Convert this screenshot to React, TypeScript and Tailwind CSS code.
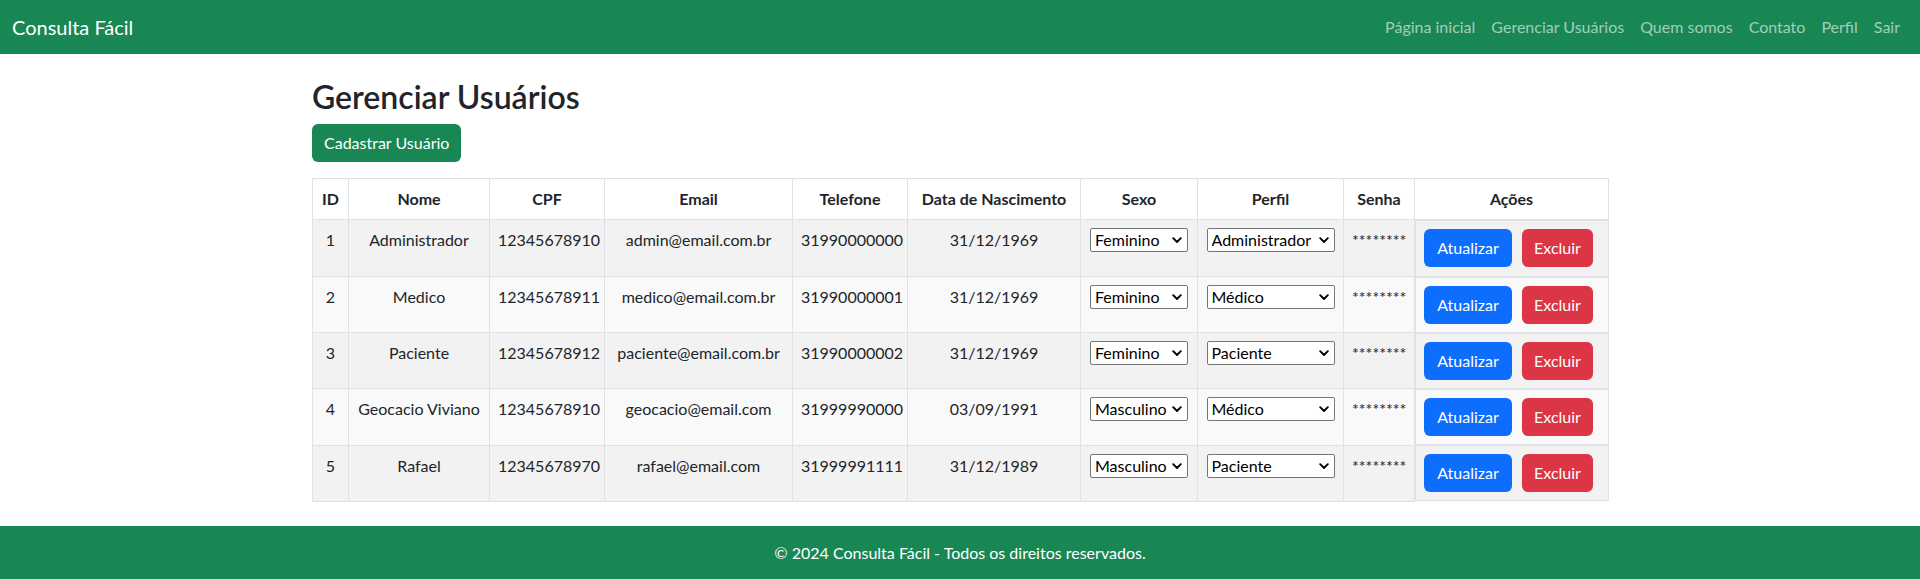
import React from 'react';

interface Usuario {
  id: number;
  nome: string;
  cpf: string;
  email: string;
  telefone: string;
  nascimento: string;
  sexo: string;
  perfil: string;
}

const usuarios: Usuario[] = [
  { id: 1, nome: 'Administrador', cpf: '12345678910', email: 'admin@email.com.br', telefone: '31990000000', nascimento: '31/12/1969', sexo: 'Feminino', perfil: 'Administrador' },
  { id: 2, nome: 'Medico', cpf: '12345678911', email: 'medico@email.com.br', telefone: '31990000001', nascimento: '31/12/1969', sexo: 'Feminino', perfil: 'Médico' },
  { id: 3, nome: 'Paciente', cpf: '12345678912', email: 'paciente@email.com.br', telefone: '31990000002', nascimento: '31/12/1969', sexo: 'Feminino', perfil: 'Paciente' },
  { id: 4, nome: 'Geocacio Viviano', cpf: '12345678910', email: 'geocacio@email.com', telefone: '31999990000', nascimento: '03/09/1991', sexo: 'Masculino', perfil: 'Médico' },
  { id: 5, nome: 'Rafael', cpf: '12345678970', email: 'rafael@email.com', telefone: '31999991111', nascimento: '31/12/1989', sexo: 'Masculino', perfil: 'Paciente' },
];

const links = ['Página inicial', 'Gerenciar Usuários', 'Quem somos', 'Contato', 'Perfil', 'Sair'];
const colunas = ['ID', 'Nome', 'CPF', 'Email', 'Telefone', 'Data de Nascimento', 'Sexo', 'Perfil', 'Senha', 'Ações'];

const Chevron = () => (
  <svg className="pointer-events-none absolute right-[6px] top-[9px]" width="10" height="7" viewBox="0 0 10 7">
    <path d="M1.2 1.2 L5 5 L8.8 1.2" fill="none" stroke="#000" strokeWidth="1.9" strokeLinecap="round" strokeLinejoin="round" />
  </svg>
);

const Select: React.FC<{ value: string; options: string[]; width: string }> = ({ value, options, width }) => (
  <span className={`relative inline-block align-top ${width}`}>
    <select
      defaultValue={value}
      className="h-[24px] w-full appearance-none rounded-[2px] border border-[#767676] bg-white pl-[4px] pr-[18px] text-left text-[16px] leading-[22px] text-black"
    >
      {options.map((o) => (
        <option key={o}>{o}</option>
      ))}
    </select>
    <Chevron />
  </span>
);

export default function App() {
  const cell = 'border border-[#dee2e6] px-2 py-2 align-top';

  return (
    <div className="flex min-h-[579px] flex-col bg-white font-[Lato,'Segoe_UI',sans-serif] text-[16px] leading-6 text-[#212529]">
      <nav className="flex h-[54px] items-center justify-between bg-[#198754] pl-3 pr-3">
        <span className="text-[20px] text-white">Consulta Fácil</span>
        <ul className="flex">
          {links.map((l) => (
            <li key={l} className="px-2 text-white/60">
              {l}
            </li>
          ))}
        </ul>
      </nav>

      <main className="mx-auto w-full max-w-[1320px] px-3 pt-6">
        <h2 className="mb-2 text-[32px] font-semibold leading-[1.2]">Gerenciar Usuários</h2>
        <button className="h-[38px] rounded-md bg-[#198754] px-3 text-white">Cadastrar Usuário</button>

        <table className="mt-4 mb-6 w-full table-fixed border-collapse text-center">
          <colgroup>
            <col className="w-[36px]" />
            <col className="w-[141px]" />
            <col className="w-[115px]" />
            <col className="w-[188px]" />
            <col className="w-[115px]" />
            <col className="w-[173px]" />
            <col className="w-[117px]" />
            <col className="w-[146px]" />
            <col className="w-[71px]" />
            <col className="w-[194px]" />
          </colgroup>
          <thead>
            <tr className="bg-white">
              {colunas.map((c) => (
                <th key={c} className="border border-[#dee2e6] px-2 py-2 font-bold whitespace-nowrap">
                  {c}
                </th>
              ))}
            </tr>
          </thead>
          <tbody>
            {usuarios.map((u, i) => {
              const bg = i % 2 === 0 ? 'bg-[#f2f2f2]' : 'bg-[#f9f9f9]';
              return (
                <tr key={u.id} className={bg}>
                  <td className={cell}>{u.id}</td>
                  <td className={`${cell} whitespace-nowrap`}>{u.nome}</td>
                  <td className={cell}>{u.cpf}</td>
                  <td className={`${cell} whitespace-nowrap`}>{u.email}</td>
                  <td className={cell}>{u.telefone}</td>
                  <td className={cell}>{u.nascimento}</td>
                  <td className={cell}>
                    <Select value={u.sexo} options={['Feminino', 'Masculino']} width="w-[98px]" />
                  </td>
                  <td className={cell}>
                    <Select value={u.perfil} options={['Administrador', 'Médico', 'Paciente']} width="w-[128px]" />
                  </td>
                  <td className={`${cell} whitespace-nowrap`}>********</td>
                  <td className="border-0 p-0 align-top">
                    <div className={`flex h-[56.2px] gap-[10px] border border-[#dee2e6] px-2 pt-2 ${bg}`}>
                      <button className="h-[38px] w-[88px] rounded-md bg-[#0d6efd] text-white">Atualizar</button>
                      <button className="h-[38px] w-[71px] rounded-md bg-[#dc3545] text-white">Excluir</button>
                    </div>
                  </td>
                </tr>
              );
            })}
          </tbody>
        </table>
      </main>

      <footer className="mt-auto flex h-[54px] items-center justify-center bg-[#198754] text-white">
        © 2024 Consulta Fácil - Todos os direitos reservados.
      </footer>
    </div>
  );
}
